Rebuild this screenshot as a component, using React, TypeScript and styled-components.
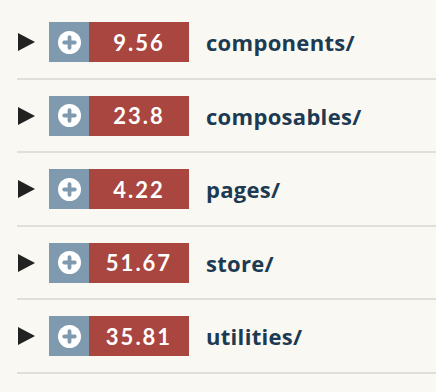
import React from "react"
import styled, { createGlobalStyle } from "styled-components"

const folders = [
  { name: "components/", size: "9.56" },
  { name: "composables/", size: "23.8" },
  { name: "pages/", size: "4.22" },
  { name: "store/", size: "51.67" },
  { name: "utilities/", size: "35.81" },
]

const GlobalStyle = createGlobalStyle`
  html, body {
    margin: 0;
    padding: 0;
    background: #faf8f3;
  }
`

function App() {
  return (
    <>
      <GlobalStyle />
      <List>
        {folders.map((f) => (
          <Row key={f.name}>
            <Arrow />
            <Badge>
              <ExpandButton>
                <PlusIcon />
              </ExpandButton>
              <Size>{f.size}</Size>
            </Badge>
            <Name>{f.name}</Name>
          </Row>
        ))}
      </List>
    </>
  )
}

function PlusIcon() {
  return (
    <svg width="23" height="23" viewBox="0 0 24 24">
      <circle cx="12" cy="12" r="12" fill="#ffffff" />
      <path
        d="M12 6.5v11M6.5 12h11"
        stroke="#7f9aae"
        strokeWidth="4"
        strokeLinecap="round"
      />
    </svg>
  )
}

const List = styled.div`
  padding: 6px 0 0 17px;
  font-family: "Open Sans", "Liberation Sans", sans-serif;
`

const Row = styled.div`
  display: flex;
  align-items: center;
  height: 40px;
  padding: 16px 0 15.5px;
  border-bottom: 2px solid #e2dfd8;
`

const Arrow = styled.div`
  width: 0;
  height: 0;
  margin: 0 14px 0 1px;
  border-top: 9px solid transparent;
  border-bottom: 9px solid transparent;
  border-left: 17px solid #222222;
`

const Badge = styled.div`
  display: flex;
  height: 40px;
`

const ExpandButton = styled.div`
  width: 40px;
  display: flex;
  align-items: center;
  justify-content: center;
  background: #7f9aae;
`

const Size = styled.div`
  width: 100px;
  display: flex;
  align-items: center;
  justify-content: center;
  background: #a94640;
  color: #ffffff;
  font-family: Lato, "Liberation Sans", sans-serif;
  font-weight: 700;
  font-size: 22px;
  letter-spacing: 2px;
`

const Name = styled.div`
  margin-left: 17px;
  color: #1c3a52;
  font-weight: 700;
  font-size: 22px;
  letter-spacing: 0.3px;
`

export default App
